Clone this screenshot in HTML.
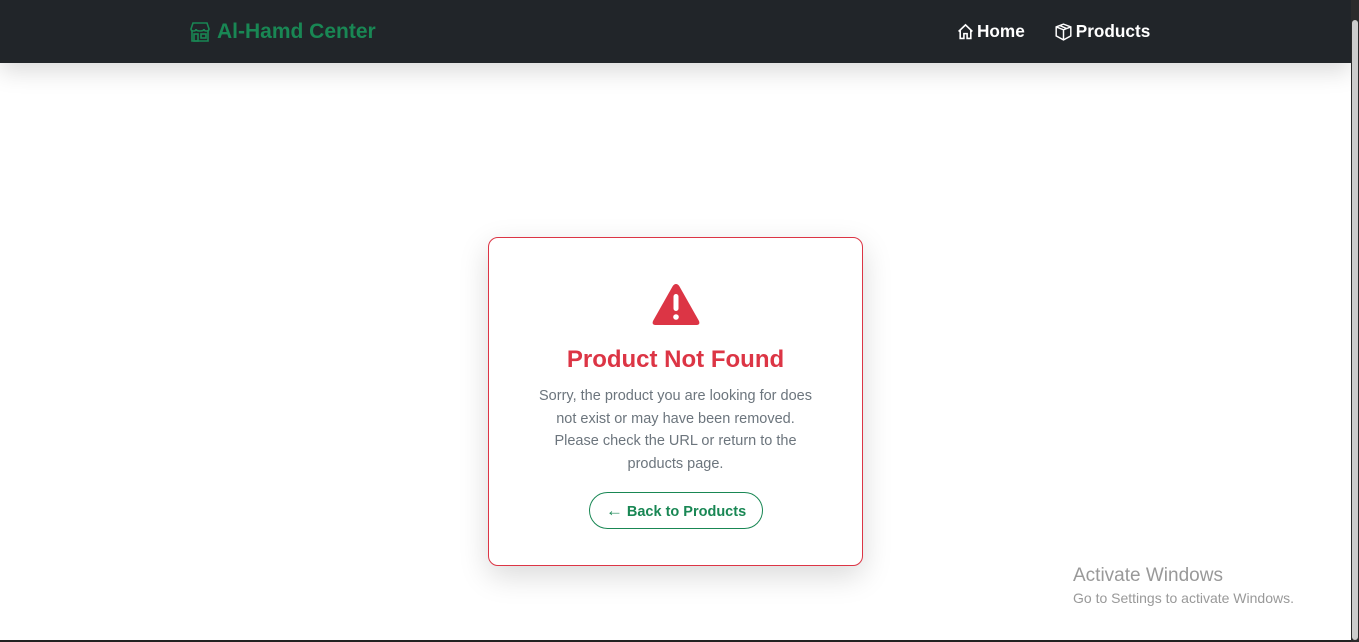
<!DOCTYPE html>
<html><head><style>
*{box-sizing:border-box;margin:0;padding:0}
body{width:1359px;height:642px;overflow:hidden;background:#fff;font-family:"Liberation Sans",sans-serif;position:relative}
.nav{position:absolute;left:0;top:0;width:1351px;height:63px;background:#212529;box-shadow:0 8px 24px rgba(0,0,0,.15)}
.brand{position:absolute;left:189px;top:20px;color:#198754;font-weight:bold;font-size:21px;display:flex;align-items:center;gap:6px}
.links{position:absolute;left:957px;top:21px;color:#fff;font-weight:bold;font-size:17.2px;display:flex;gap:29px}
.links span{display:flex;align-items:center;gap:3px}
.sb{position:absolute;right:0;top:0;width:8px;height:642px;background:#2b2b2b}
.sb:after{content:"";position:absolute;left:1px;top:20px;width:6px;height:620px;background:#ccc;border-radius:3px}
.bottom{position:absolute;left:0;top:640px;width:1351px;height:2px;background:#222}
.card{position:absolute;left:488px;top:237px;width:375px;height:329px;border:1px solid #dc3545;border-radius:10px;box-shadow:0 10px 30px rgba(0,0,0,.15);text-align:center;background:#fff}
h1{position:absolute;top:108px;width:100%;font-size:24px;color:#dc3545}
p{position:absolute;top:147px;left:46px;right:46px;font-size:14.5px;line-height:22.7px;color:#6c757d}
.btn{position:absolute;left:100px;top:254px;width:174px;height:37px;border:1px solid #198754;border-radius:19px;color:#198754;font-weight:bold;font-size:14.5px;line-height:35px}
.btn b{font-size:17px;font-weight:normal}
.aw{position:absolute;left:1073px;top:565px;color:#999;font-size:19px}
.aw2{position:absolute;left:1073px;top:590px;color:#999;font-size:14px}
</style></head><body>
<div class="nav">
<div class="brand"><svg width="22" height="20" viewBox="0 0 22 20" fill="none" stroke="#198754" stroke-width="1.6"><path d="M2 7 L4 1 H18 L20 7 Q20 9 17.5 9 Q15 9 15 7 Q15 9 11 9 Q7 9 7 7 Q7 9 4.5 9 Q2 9 2 7Z"/><path d="M3 9 V19 H19 V9"/><rect x="5" y="12" width="4" height="7"/><rect x="12" y="12" width="5" height="4"/></svg>Al-Hamd Center</div>
<div class="links"><span><svg width="17" height="17" viewBox="0 0 16 16" fill="none" stroke="#fff" stroke-width="1.5"><path d="M1.5 8 L8 1.8 L14.5 8 M3 6.5 V14.5 H6.5 V10 H9.5 V14.5 H13 V6.5"/></svg>Home</span><span><svg width="19" height="18" viewBox="0 0 16 16" fill="none" stroke="#fff" stroke-width="1.3"><path d="M8 1 L14.5 3.5 V11.5 L8 15 L1.5 11.5 V3.5Z M1.5 3.5 L8 6 L14.5 3.5 M8 6 V15 M4.5 2.2 L11 5"/></svg>Products</span></div>
</div>
<div class="card">
<svg style="position:absolute;left:162px;top:44px" width="50" height="45" viewBox="0 0 50 45"><path d="M25 2 Q27 2 28.5 4.5 L48 39 Q49.5 43 45 43 H5 Q0.5 43 2 39 L21.5 4.5 Q23 2 25 2Z" fill="#dc3545"/><rect x="22.5" y="12" width="5" height="17" rx="2.5" fill="#fff"/><circle cx="25" cy="35" r="2.8" fill="#fff"/></svg>
<h1>Product Not Found</h1>
<p>Sorry, the product you are looking for does not exist or may have been removed. Please check the URL or return to the products page.</p>
<div class="btn"><b>←</b> Back to Products</div>
</div>
<div class="aw">Activate Windows</div>
<div class="aw2">Go to Settings to activate Windows.</div>
<div class="sb"></div>
<div class="bottom"></div>
</body></html>
